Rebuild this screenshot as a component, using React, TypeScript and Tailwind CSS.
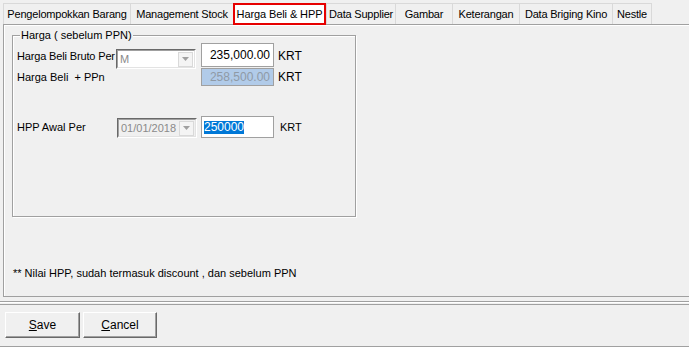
import React from "react";

const tabs: { label: string; w: number; active?: boolean }[] = [
  { label: "Pengelompokkan Barang", w: 127 },
  { label: "Management Stock", w: 103 },
  { label: "Harga Beli & HPP", w: 93, active: true },
  { label: "Data Supplier", w: 69 },
  { label: "Gambar", w: 57 },
  { label: "Keterangan", w: 67 },
  { label: "Data Briging Kino", w: 93 },
  { label: "Nestle", w: 40 },
];

function Combo({ value, white }: { value: string; white?: boolean }) {
  return (
    <div
      className={`flex h-[20px] w-[80px] items-stretch border border-t-[#696969] border-l-[#696969] border-b-white border-r-white ${
        white ? "bg-white" : "bg-[#f0f0f0]"
      }`}
    >
      <div className="flex flex-1 items-center overflow-hidden border border-t-[#a0a0a0] border-l-[#a0a0a0] border-b-[#e3e3e3] border-r-[#e3e3e3] pl-[2px]">
        <span className="flex-1 overflow-hidden whitespace-nowrap text-[11px] text-[#8a8a8a]">{value}</span>
        <div className="mr-[1px] flex h-[15px] w-[15px] shrink-0 items-center justify-center border border-[#d9d9d9] bg-[#f4f4f4]">
          <svg width="7" height="4" viewBox="0 0 7 4">
            <path d="M0 0h7L3.5 4z" fill="#a0a0a0" />
          </svg>
        </div>
      </div>
    </div>
  );
}

export default function App() {
  return (
    <div
      className="relative h-[347px] w-[689px] overflow-hidden bg-[#f0f0f0] text-[11px] leading-[13px] text-black"
      style={{ fontFamily: '"Liberation Sans", Arial, sans-serif' }}
    >
      {/* tab strip */}
      <div className="flex h-[24px] items-end pl-[3px]">
        {tabs.map((t) =>
          t.active ? (
            <div
              key={t.label}
              className="relative z-10 -mb-[1px] flex h-[22px] items-center justify-center whitespace-nowrap border-2 border-[#e60000] bg-white tracking-[-0.1px]"
              style={{ width: t.w }}
            >
              {t.label}
            </div>
          ) : (
            <div
              key={t.label}
              className="flex h-[21px] items-center justify-center whitespace-nowrap border border-r-0 border-b-0 border-[#d9d9d9] bg-[#f0f0f0] tracking-[-0.2px] last:border-r"
              style={{ width: t.w }}
            >
              {t.label}
            </div>
          )
        )}
      </div>

      {/* tab page */}
      <div className="ml-[3px] flex h-[273px] flex-col border border-r-0 border-[#a0a0a0] shadow-[inset_1px_1px_0_#fff] pl-[8px] pt-[10px]">
        {/* group box */}
        <div className="relative h-[182px] w-[344px] border border-[#a0a0a0] shadow-[inset_1px_1px_0_#fff,1px_1px_0_#fff]">
          <span className="absolute -top-[7px] left-[7px] whitespace-nowrap bg-[#f0f0f0] px-[1px]">Harga ( sebelum PPN)</span>

          <div className="flex flex-col pl-[4px] pt-[7px]">
            {/* row 1 */}
            <div className="flex h-[24px] items-start">
              <span className="mt-[7px] w-[99px] whitespace-nowrap tracking-[-0.15px]">Harga Beli Bruto Per</span>
              <div className="mt-[6px]">
                <Combo value="M" white />
              </div>
              <div className="ml-[5px] flex h-[24px] w-[73px] items-center justify-end border border-[#a0a0a0] bg-white pr-[3px] text-[12px]">
                235,000.00
              </div>
              <span className="ml-[4px] mt-[7px] text-[12px]">KRT</span>
            </div>
            {/* row 2 */}
            <div className="mt-[1px] flex h-[18px] items-center">
              <span className="w-[184px] whitespace-nowrap">Harga Beli&nbsp; + PPn</span>
              <div className="flex h-[18px] w-[73px] items-center justify-end border border-[#a0a0a0] bg-[#b1cbe9] pr-[3px] text-[12px] text-[#8f9aa6]">
                258,500.00
              </div>
              <span className="ml-[4px] text-[12px]">KRT</span>
            </div>
            {/* row 3 */}
            <div className="mt-[30px] flex h-[22px] items-start">
              <span className="mt-[5px] w-[100px] whitespace-nowrap">HPP Awal Per</span>
              <div className="mt-[2px]">
                <Combo value="01/01/2018" />
              </div>
              <div className="ml-[4px] flex h-[22px] w-[73px] items-center border border-[#a0a0a0] bg-white pl-[2px] text-[12px]">
                <span className="bg-[#0078d7] text-white">250000</span>
              </div>
              <span className="ml-[6px] mt-[5px]">KRT</span>
            </div>
          </div>
        </div>

        <div className="mt-[50px] whitespace-nowrap pl-[1px]">** Nilai HPP, sudah termasuk discount , dan sebelum PPN</div>
      </div>

      {/* bottom panel */}
      <div className="mt-[4px] h-[46px] border-t border-b border-t-[#a0a0a0] border-b-[#a0a0a0] shadow-[inset_0_1px_0_#fff]">
        <div className="mt-[2px] border-t border-[#a0a0a0]" />
        <div className="flex gap-[3px] pl-[5px] pt-[7px]">
          <button className="flex h-[26px] w-[75px] items-center justify-center border border-t-white border-l-white border-b-[#696969] border-r-[#696969] bg-[#f0f0f0] shadow-[inset_-1px_-1px_0_#a0a0a0] text-[12px]">
            <span>
              <span className="underline">S</span>ave
            </span>
          </button>
          <button className="flex h-[26px] w-[74px] items-center justify-center border border-t-white border-l-white border-b-[#696969] border-r-[#696969] bg-[#f0f0f0] shadow-[inset_-1px_-1px_0_#a0a0a0] text-[12px]">
            <span>
              <span className="underline">C</span>ancel
            </span>
          </button>
        </div>
      </div>
    </div>
  );
}
